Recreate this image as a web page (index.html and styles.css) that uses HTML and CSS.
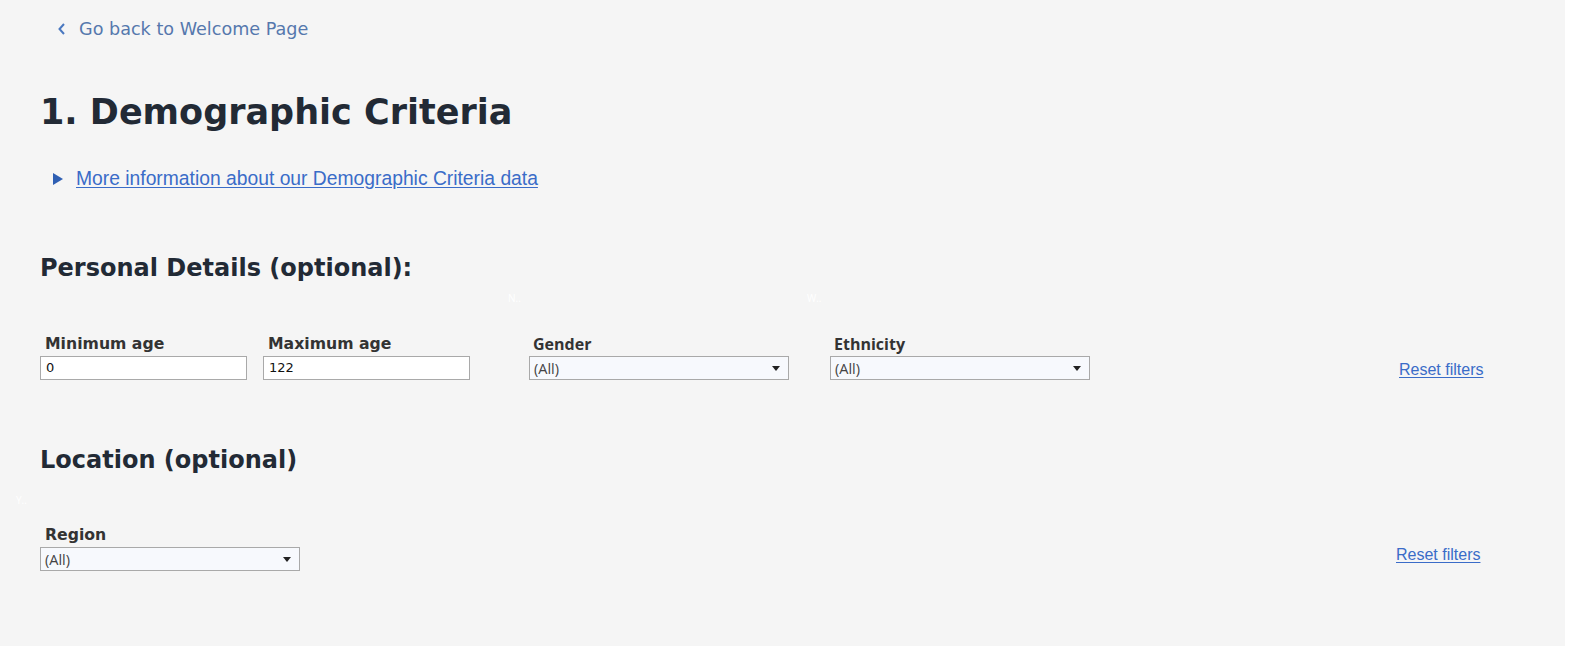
FILE: index.html
```html
<!DOCTYPE html>
<html lang="en">
<head>
<meta charset="utf-8">
<title>Demographic Criteria</title>
<link rel="stylesheet" href="styles.css">
</head>
<body>
<div class="page">
  <a class="back" href="#">
    <svg class="chev" width="10" height="14" viewBox="0 0 10 14"><path d="M7 2 L2.5 7 L7 12" fill="none" stroke="#4a78c0" stroke-width="2"/></svg>
    <span>Go back to Welcome Page</span>
  </a>

  <h1 class="title">1. Demographic Criteria</h1>

  <div class="more">
    <span class="tri"></span>
    <a href="#" class="more-link">More information about our Demographic Criteria data</a>
  </div>

  <h2 class="section">Personal Details (optional):</h2>
  <div class="ghosts ghosts-personal">
    <span class="ghost g-n">N..</span>
    <span class="ghost g-w">W..</span>
  </div>

  <div class="row row-personal">
    <div class="field f-min">
      <label class="lbl">Minimum age</label>
      <div class="input">0</div>
    </div>
    <div class="field f-max">
      <label class="lbl">Maximum age</label>
      <div class="input">122</div>
    </div>
    <div class="field f-gender">
      <label class="lbl lbl-sans">Gender</label>
      <div class="select"><span>(All)</span><span class="arrow"></span></div>
    </div>
    <div class="field f-eth">
      <label class="lbl lbl-sans">Ethnicity</label>
      <div class="select"><span>(All)</span><span class="arrow"></span></div>
    </div>
    <a href="#" class="reset reset-1">Reset filters</a>
  </div>

  <h2 class="section section-loc">Location (optional)</h2>
  <div class="ghosts ghosts-loc">
    <span class="ghost g-y">Y..</span>
  </div>

  <div class="row row-loc">
    <div class="field f-region">
      <label class="lbl">Region</label>
      <div class="select"><span>(All)</span><span class="arrow"></span></div>
    </div>
    <a href="#" class="reset reset-2">Reset filters</a>
  </div>
</div>
</body>
</html>
```

FILE: styles.css
```css
html, body {
  margin: 0;
  padding: 0;
  background: #ffffff;
}

.page {
  width: 1565px;
  height: 646px;
  background: #f5f5f5;
  box-sizing: border-box;
  padding: 19px 0 0 0;
  font-family: "DejaVu Sans", sans-serif;
  color: #222a35;
  overflow: hidden;
}

.back {
  display: flex;
  align-items: center;
  margin-left: 57px;
  gap: 12px;
  color: #5578ad;
  text-decoration: none;
  font-size: 17.6px;
  height: 20px;
}
.chev { flex: none; }

.title {
  margin: 52px 0 0 40px;
  font-size: 35px;
  font-weight: bold;
  line-height: 42px;
  color: #222a35;
}

.more {
  display: flex;
  align-items: center;
  margin: 34px 0 0 53px;
  gap: 13px;
}
.tri {
  width: 0;
  height: 0;
  border-top: 6px solid transparent;
  border-bottom: 6px solid transparent;
  border-left: 10px solid #2f5fb3;
}
.more-link {
  font-family: "Liberation Sans", Arial, sans-serif;
  font-size: 19.3px;
  color: #3a6cc8;
  text-decoration: underline;
  text-underline-offset: 2px;
  line-height: 24px;
}

.section {
  margin: 62px 0 0 40px;
  font-size: 24px;
  font-weight: bold;
  line-height: 30px;
  color: #222a35;
}
.section-loc { margin-top: 65px; }

.ghosts {
  position: relative;
  height: 0;
}
.ghost {
  position: absolute;
  font-size: 10px;
  color: #ffffff;
  font-family: "Open Sans", sans-serif;
}
.g-n { left: 508px; top: 8px; }
.g-w { left: 807px; top: 8px; }
.g-y { left: 16px; top: 18px; }

.row {
  display: flex;
  align-items: flex-start;
  margin-left: 40px;
}
.row-personal { margin-top: 52px; }
.row-loc { margin-top: 51px; }

.field {
  display: flex;
  flex-direction: column;
}
.lbl {
  font-size: 15.7px;
  font-weight: bold;
  color: #333333;
  padding-left: 5px;
  line-height: 18px;
  margin-bottom: 3px;
}
.lbl-sans {
  font-family: "Open Sans", sans-serif;
  font-size: 16px;
  padding-left: 4px;
  line-height: 19px;
  margin-top: 0;
  margin-bottom: 2px;
}

.input {
  box-sizing: border-box;
  width: 207px;
  height: 24px;
  background: #ffffff;
  border: 1px solid #a9a9a9;
  font-size: 13px;
  line-height: 22px;
  padding-left: 5px;
  color: #111;
}

.select {
  box-sizing: border-box;
  width: 260px;
  height: 24px;
  background: #f7f9fd;
  border: 1px solid #a9a9a9;
  display: flex;
  align-items: center;
  justify-content: space-between;
  padding: 0 8px 0 4px;
  font-family: "Open Sans", sans-serif;
  font-size: 14.5px;
  color: #444;
}
.arrow {
  width: 0;
  height: 0;
  border-left: 4px solid transparent;
  border-right: 4px solid transparent;
  border-top: 5px solid #222;
}

.f-max { margin-left: 16px; }
.f-gender { margin-left: 59px; }
.f-eth { margin-left: 41px; }

.reset {
  font-family: "Liberation Sans", Arial, sans-serif;
  font-size: 16px;
  color: #3a6cc8;
  text-decoration: underline;
  text-underline-offset: 2px;
}
.reset-1 { margin-left: 309px; margin-top: 26px; }
.reset-2 { margin-left: 1096px; margin-top: 20px; }
```
